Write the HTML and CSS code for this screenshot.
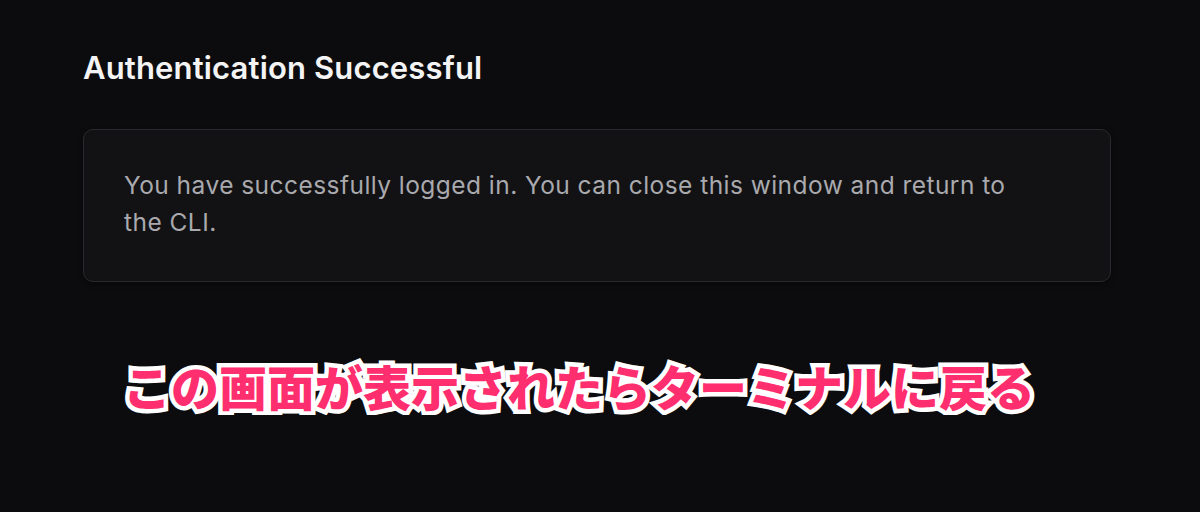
FILE: index.html
```html
<!DOCTYPE html>
<html lang="en">
<head>
    <meta charset="UTF-8">
    <title>Authentication Successful</title>
    <link rel="stylesheet" href="styles.css">
</head>
<body>
<div class="page">
    <h1 class="title">Authentication Successful</h1>
    <div class="card">
        <p class="message">You have successfully logged in. You can close this window and return to the CLI.</p>
    </div>
    <p class="note" lang="ja">この画面が表示されたらターミナルに戻る</p>
</div>
</body>
</html>
```

FILE: styles.css
```css
*{
    margin: 0;
    padding: 0;
    box-sizing: border-box;
}
html,body{
    background: #0c0c0e;
}
body{
    font-family: Inter, "Noto Sans", sans-serif;
    color: #f4f4f5;
}
.page{
    width: 1028px;
    margin-left: 83px;
    padding-top: 48px;
}
.title{
    font-size: 31px;
    font-weight: 600;
    line-height: 40px;
    letter-spacing: 0.15px;
    color: #f4f4f5;
}
.card{
    margin-top: 41px;
    padding: 37px 100px 40px 40px;
    background: #121214;
    border: 1px solid #2a2a2e;
    border-radius: 10px;
    box-shadow: 0 2px 6px rgba(0,0,0,0.4);
}
.message{
    font-size: 24.5px;
    line-height: 37px;
    letter-spacing: 0.45px;
    color: #a9a9ae;
}
.note{
    margin-top: 73px;
    padding-left: 40px;
    font-family: "Noto Sans CJK JP", sans-serif;
    font-size: 48px;
    font-weight: 900;
    line-height: 60px;
    color: #ff2e6e;
    -webkit-text-stroke: 9px #ffffff;
    paint-order: stroke fill;
}
```
